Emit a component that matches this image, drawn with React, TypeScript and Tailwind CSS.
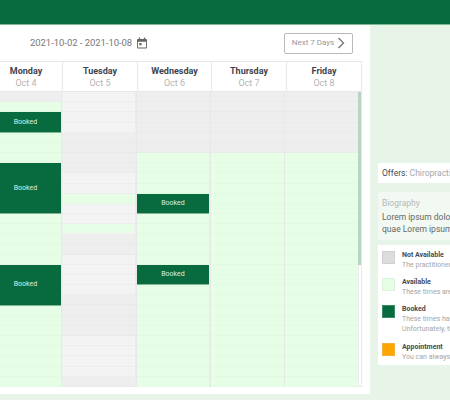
const ROW = 10.17;

type Seg = [string, number];

const columns: Seg[][] = [
  [["g", 1], ["a", 1], ["b", 2], ["a", 3], ["b", 5], ["a", 5], ["b", 4], ["a", 8]],
  [["l", 4], ["g", 4], ["l", 2], ["a", 1], ["l", 2], ["t", 1], ["g", 2], ["l", 4], ["g", 4], ["l", 4], ["g", 1]],
  [["g", 6], ["a", 4], ["b", 2], ["a", 5], ["b", 2], ["a", 10]],
  [["g", 6], ["a", 23]],
  [["g", 6], ["a", 23]],
];

const widths = ["w-[73px] ml-[-10px]", "w-[75px]", "w-[74px]", "w-[75px]", "w-[75px]"];
const bodyWidths = [
  "w-[72px] ml-[-10px] border-r",
  "w-[75px] pr-[1px] border-r",
  "w-[74px] pr-[1px] border-r",
  "w-[74px] border-r",
  "w-[74px] pr-[1px]",
];
const headers = [
  ["Monday", "Oct 4"],
  ["Tuesday", "Oct 5"],
  ["Wednesday", "Oct 6"],
  ["Thursday", "Oct 7"],
  ["Friday", "Oct 8"],
];

function Segment({ kind, n }: { kind: string; n: number }) {
  const height = n * ROW;
  if (kind === "b") {
    return (
      <div
        className="flex items-center justify-center bg-[#076b3f] text-[7px] text-[#dcefe4] border-b border-[#7fb795]"
        style={{ height }}
      >
        Booked
      </div>
    );
  }
  const cells = Array.from({ length: n });
  const cellClass =
    kind === "a"
      ? "bg-[#e6fde6] border-b border-[#e2f9e2]"
      : kind === "t"
        ? "bg-[#e6fde6] border-x border-b border-x-[#f2f2f2] border-b-[#f2f2f2]"
        : kind === "l"
          ? "bg-[#f3f3f3] border-b border-dotted border-[#e8e8e8]"
          : "bg-[#eeeeee] border-b border-dotted border-[#e6e6e6]";
  return (
    <div style={{ height }} className="flex flex-col">
      {cells.map((_, i) => (
        <div key={i} className={`flex-1 ${cellClass}`} />
      ))}
    </div>
  );
}

function Legend({
  swatch,
  title,
  lines,
  extra = "",
}: {
  swatch: string;
  title: string;
  lines: string[];
  extra?: string;
}) {
  return (
    <div className={`flex gap-[7px] pl-[4px] ${extra}`}>
      <div className={`w-[13px] h-[13px] mt-[1px] shrink-0 border ${swatch}`} />
      <div className="whitespace-nowrap">
        <div className="text-[7px] leading-[10px] font-bold text-[#444b55]">{title}</div>
        {lines.map((l) => (
          <div key={l} className="text-[7px] leading-[10px] text-[#a5a5a5]">
            {l}
          </div>
        ))}
      </div>
    </div>
  );
}

export default function App() {
  return (
    <div
      className="w-[450px] h-[400px] overflow-hidden bg-[#e8f4e8] text-[#555]"
      style={{ fontFamily: 'Roboto, "Liberation Sans", sans-serif' }}
    >
      <div className="h-[25px] bg-[#076b3f] border-b border-[#7fb795]" />
      <div className="flex items-start">
        <div className="w-[370px] h-[369px] shrink-0 bg-white overflow-hidden">
          <div className="flex items-center h-[36px] pr-[17px]">
            <div className="ml-[30px] flex items-center gap-[5px] text-[9.5px] tracking-[-0.05px] text-[#777]">
              <span>2021-10-02 - 2021-10-08</span>
              <svg width="10" height="12" viewBox="0 0 11 12" fill="#666">
                <rect x="2" y="0" width="1.5" height="2.5" />
                <rect x="7.5" y="0" width="1.5" height="2.5" />
                <path d="M1 1.5h9a1 1 0 0 1 1 1v8.5a1 1 0 0 1-1 1H1a1 1 0 0 1-1-1V2.5a1 1 0 0 1 1-1zm0 3v6.5h9V4.5z" />
                <rect x="2.5" y="6" width="2.5" height="2.5" />
              </svg>
            </div>
            <div className="ml-auto flex items-center justify-center gap-[3px] w-[69px] h-[21px] rounded-[2px] border border-[#b9b9b9] text-[8px] text-[#999]">
              <span>Next 7 Days</span>
              <svg width="8" height="12" viewBox="0 0 8 12" fill="none" stroke="#777" strokeWidth="1.4">
                <path d="M1.5 1l5 5-5 5" />
              </svg>
            </div>
          </div>
          <div className="flex w-[362px] h-[31px] border-y border-[#e8e8e8]">
            {headers.map(([d, o], i) => (
              <div
                key={d}
                className={`${widths[i]} flex flex-col items-center justify-center border-r border-[#e8e8e8]`}
              >
                <div className="text-[9px] leading-[12px] font-bold text-[#3c4450]">{d}</div>
                <div className="text-[9px] leading-[12px] text-[#b5b5b5]">{o}</div>
              </div>
            ))}
          </div>
          <div className="relative flex w-[362px] h-[295px] border-b border-r border-[#e8e8e8]">
            {columns.map((segs, i) => (
              <div key={i} className={`${bodyWidths[i]} border-[#e8e8e8] bg-[#ececec]`}>
                {segs.map(([k, n], j) => (
                  <Segment key={j} kind={k} n={n} />
                ))}
              </div>
            ))}
            <div className="absolute right-0 top-0 w-[3px] h-[173px] bg-[#b7d5c2]" />
          </div>
        </div>
        <div className="ml-[8px] mt-[138px] w-[200px] shrink-0 flex flex-col">
          <div className="h-[20px] bg-white flex items-center pl-[4px] text-[8.5px] text-[#444b55]">
            <span>Offers:&nbsp;</span>
            <span className="text-[#a0a8b0]">Chiropractic</span>
          </div>
          <div className="mt-[9px] h-[48px] bg-[#f1f9f2] pl-[4px] pt-[5px] whitespace-nowrap">
            <div className="text-[8.5px] leading-[12px] text-[#b8b8b8]">Biography</div>
            <div className="mt-[2px] text-[8.5px] leading-[12px] text-[#666]">Lorem ipsum dolor sit amet</div>
            <div className="text-[8.5px] leading-[12px] text-[#666]">quae Lorem ipsum dolor</div>
          </div>
          <div className="mt-[5px] h-[120px] bg-white pt-[5px] flex flex-col gap-[7px]">
            <Legend
              swatch="bg-[#dddddd] border-[#d0d0d0]"
              title="Not Available"
              lines={["The practitioner is not available"]}
            />
            <Legend
              swatch="bg-[#e6fde6] border-[#dcf3dc]"
              title="Available"
              lines={["These times are available"]}
            />
            <Legend
              swatch="bg-[#076b3f] border-[#3f8a66]"
              title="Booked"
              lines={["These times have been booked", "Unfortunately, they are taken"]}
              extra="pb-[1px]"
            />
            <Legend
              swatch="bg-[#ffa500] border-[#f0b040]"
              title="Appointment"
              lines={["You can always view your visit"]}
            />
          </div>
        </div>
      </div>
    </div>
  );
}
